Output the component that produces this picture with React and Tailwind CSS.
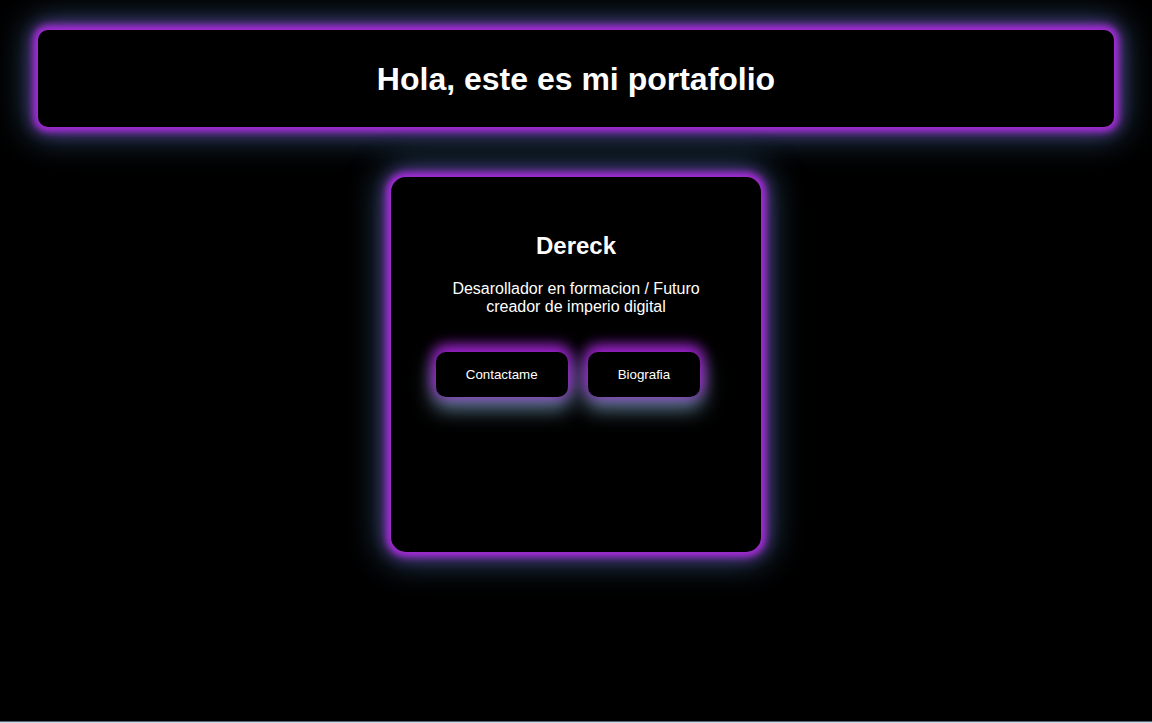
export default function App() {
  return (
    <div
      className="relative min-h-[723px] w-full bg-black overflow-hidden flex flex-col items-center"
      style={{ fontFamily: '"Liberation Sans", Arial, sans-serif' }}
    >
      <header className="mt-[30px] w-[1076px] h-[97px] rounded-[10px] bg-black flex items-center justify-center shadow-[0_0_6px_4px_#a52ad6,0_0_14px_6px_rgba(150,50,210,0.6),0_0_32px_10px_rgba(90,150,210,0.5)]">
        <h1 className="text-[32px] font-bold text-white leading-none">Hola, este es mi portafolio</h1>
      </header>

      <section className="mt-[50px] w-[370px] h-[375px] rounded-[15px] bg-black flex flex-col items-center pt-[55px] shadow-[0_0_6px_4px_#a52ad6,0_0_14px_6px_rgba(150,50,210,0.6),0_0_32px_10px_rgba(90,150,210,0.5)]">
        <h2 className="text-[24px] font-bold text-white leading-[28px]">Dereck</h2>
        <p className="mt-[20px] w-[280px] text-center text-[16px] text-white leading-[18px]">
          Desarollador en formacion / Futuro creador de imperio digital
        </p>
        <div className="mt-[36px] flex gap-[20px] -translate-x-[8px]">
          <button className="h-[45px] px-[30px] rounded-[10px] bg-black text-white text-[13.33px] shadow-[0_-4px_14px_3px_rgba(170,30,220,0.95),0_9px_20px_3px_rgba(150,200,235,0.65)]">
            Contactame
          </button>
          <button className="h-[45px] px-[30px] rounded-[10px] bg-black text-white text-[13.33px] shadow-[0_-4px_14px_3px_rgba(170,30,220,0.95),0_9px_20px_3px_rgba(150,200,235,0.65)]">
            Biografia
          </button>
        </div>
      </section>

      <div className="absolute bottom-0 left-0 right-0 h-[2px] flex flex-col">
        <div className="h-px bg-[#56677a]" />
        <div className="h-px bg-[#c9d6e3]" />
      </div>
    </div>
  );
}
